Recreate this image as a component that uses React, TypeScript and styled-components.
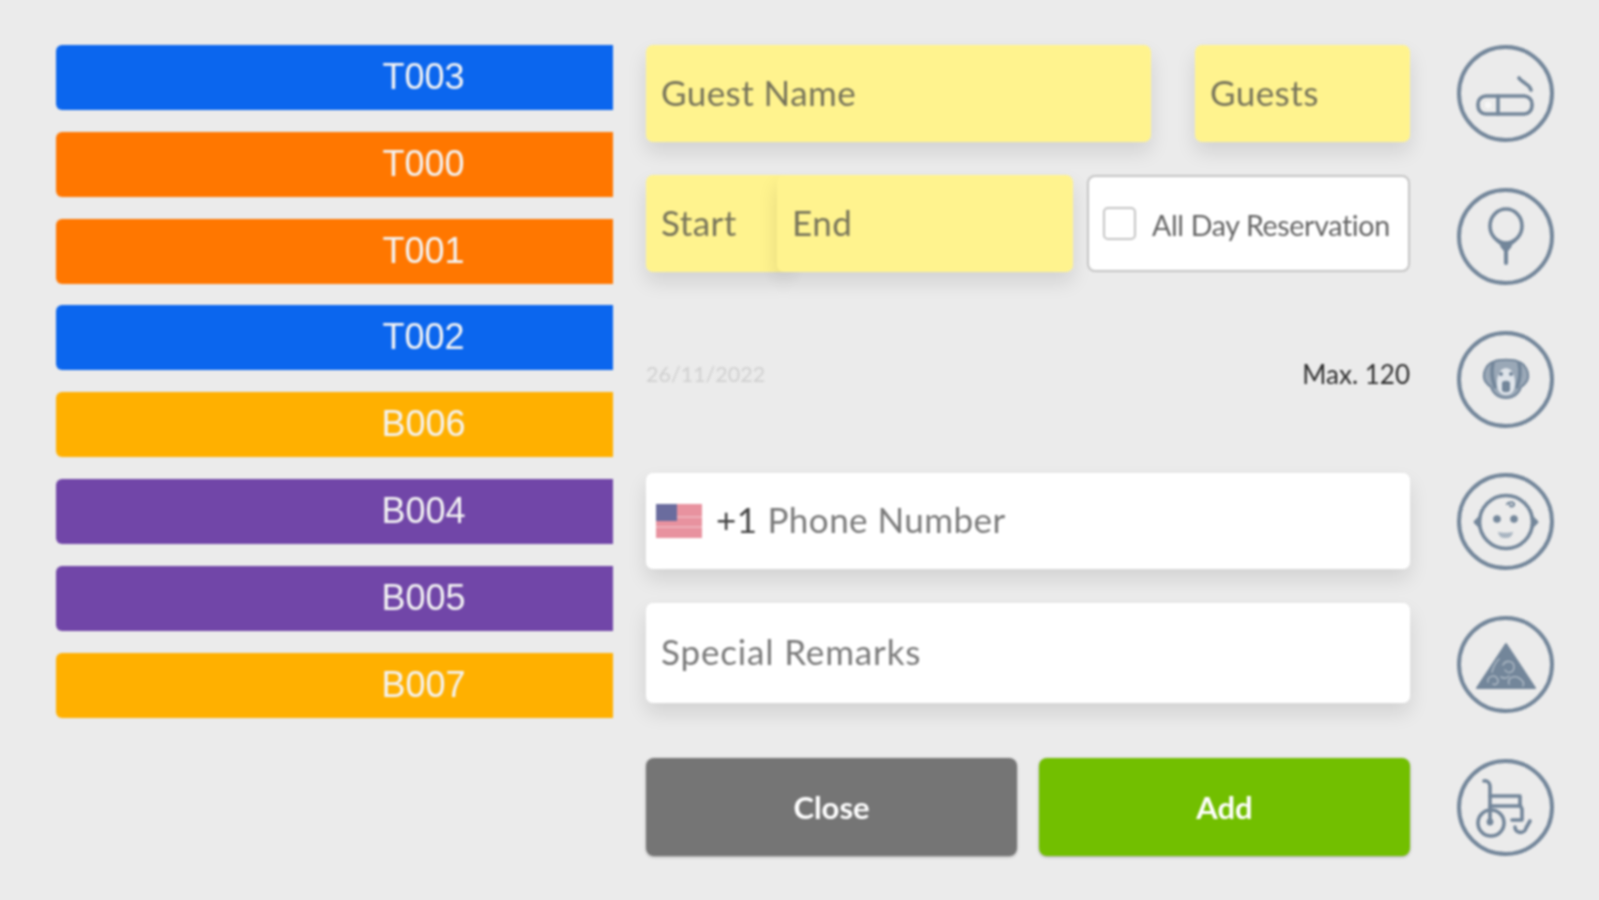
import React from 'react';
import styled, { createGlobalStyle } from 'styled-components';

const GlobalStyle = createGlobalStyle`
    html, body {
        margin: 0;
        padding: 0;
        background: #ebebeb;
    }
    body {
        font-family: Lato, "Open Sans", sans-serif;
    }
`;

const Page = styled.div`
    width: 1599px;
    height: 900px;
    box-sizing: border-box;
    padding: 45px 45px 0 56px;
    display: flex;
    align-items: flex-start;
    overflow: hidden;
    filter: blur(0.9px);
`;

const TableList = styled.div`
    width: 557px;
    display: flex;
    flex-direction: column;
    gap: 21.8px;
    margin-right: 33px;
`;

const TableBar = styled.div<{ color: string }>`
    height: 65px;
    box-sizing: border-box;
    padding: 0 0 1px 178px;
    display: flex;
    align-items: center;
    justify-content: center;
    background: ${(props) => props.color};
    border-radius: 6px 0 0 6px;
    color: #f4f4f4;
    font-family: "Liberation Sans", sans-serif;
    font-size: 36px;
`;

const Form = styled.div`
    width: 764px;
    display: flex;
    flex-direction: column;
    margin-right: 47px;
`;

const Row = styled.div<{ mb: number; h: number }>`
    display: flex;
    height: ${(props) => props.h}px;
    margin-bottom: ${(props) => props.mb}px;
`;

const Field = styled.div<{ yellow?: boolean; w?: number; ml?: number; spacing?: number }>`
    box-sizing: border-box;
    display: flex;
    align-items: center;
    padding: 0 0 4px 15px;
    ${(props) => (props.w ? `width: ${props.w}px;` : 'flex: 1;')}
    ${(props) => (props.ml ? `margin-left: ${props.ml}px;` : '')}
    position: relative;
    background: ${(props) => (props.yellow ? '#fff38e' : '#ffffff')};
    color: ${(props) => (props.yellow ? '#77745a' : '#7a7a7a')};
    border-radius: 7px;
    box-shadow: 0 10px 20px rgba(0, 0, 0, 0.11);
    font-size: 35px;
    letter-spacing: ${(props) => props.spacing || 0.45}px;
    white-space: nowrap;
`;

const CheckCard = styled.div`
    width: 323px;
    margin-left: 14px;
    box-sizing: border-box;
    display: flex;
    align-items: center;
    padding-left: 14px;
    background: #ffffff;
    border: 2px solid #c4c4c4;
    border-radius: 8px;
`;

const CheckBox = styled.span`
    width: 33px;
    height: 33px;
    box-sizing: border-box;
    border: 2px solid #c4c4c4;
    border-radius: 5px;
    margin-right: 16px;
    background: #ffffff;
`;

const CheckLabel = styled.span`
    color: #646464;
    font-size: 28.6px;
    letter-spacing: -0.35px;
    white-space: nowrap;
    padding-top: 3px;
`;

const InfoRow = styled.div`
    height: 201px;
    display: flex;
    align-items: center;
    justify-content: space-between;
    padding-top: 2px;
    box-sizing: border-box;
`;

const DateText = styled.span`
    color: #d0d0d0;
    font-size: 21.5px;
`;

const MaxText = styled.span`
    color: #2e2e2e;
    font-size: 26px;
`;

const FlagWrap = styled.svg`
    width: 46px;
    height: 34px;
    margin: 4px 14px 0 -5px;
    flex-shrink: 0;
`;

const DialCode = styled.span`
    color: #444444;
    margin-right: 10px;
`;

const ActionButton = styled.div<{ color: string; w: number; ml?: number }>`
    width: ${(props) => props.w}px;
    margin-left: ${(props) => props.ml || 0}px;
    display: flex;
    align-items: center;
    justify-content: center;
    background: ${(props) => props.color};
    color: #ffffff;
    border-radius: 8px;
    box-shadow: 0 1px 3px rgba(0, 0, 0, 0.3);
    font-size: 31px;
    font-weight: 700;
`;

const IconColumn = styled.div`
    height: 811px;
    display: flex;
    flex-direction: column;
    justify-content: space-between;
`;

const CircleIcon = styled.svg`
    width: 97px;
    height: 97px;
    display: block;
    color: #73869a;
`;

const tables = [
    { name: 'T003', color: '#0b66ee' },
    { name: 'T000', color: '#ff7700' },
    { name: 'T001', color: '#ff7700' },
    { name: 'T002', color: '#0b66ee' },
    { name: 'B006', color: '#ffb000' },
    { name: 'B004', color: '#7146a8' },
    { name: 'B005', color: '#7146a8' },
    { name: 'B007', color: '#ffb000' },
];

const Circle: React.FC<{ children: React.ReactNode }> = ({ children }) => (
    <CircleIcon viewBox="0 0 97 97" fill="none" stroke="currentColor" strokeWidth="3.6" strokeLinecap="round" strokeLinejoin="round">
        <circle cx="48.5" cy="48.5" r="46.5" strokeWidth="4" />
        {children}
    </CircleIcon>
);

const UsFlag = () => (
    <FlagWrap viewBox="0 0 46 34">
        <rect width="46" height="34" fill="#e8929f" />
        <rect y="12" x="21" width="25" height="2" fill="#eeb0b9" />
        <rect y="22" width="46" height="2" fill="#eeb0b9" />
        <rect width="21" height="17" fill="#6a6c9e" />
    </FlagWrap>
);

const App: React.FC = () => {
    return (
        <Page>
            <GlobalStyle />
            <TableList>
                {tables.map((t) => (
                    <TableBar key={t.name} color={t.color}>
                        {t.name}
                    </TableBar>
                ))}
            </TableList>
            <Form>
                <Row h={97} mb={33}>
                    <Field yellow w={505}>Guest Name</Field>
                    <Field yellow w={215} ml={44}>Guests</Field>
                </Row>
                <Row h={97} mb={0}>
                    <Field yellow w={144}>Start</Field>
                    <Field yellow w={296} ml={-13}>End</Field>
                    <CheckCard>
                        <CheckBox />
                        <CheckLabel>All Day Reservation</CheckLabel>
                    </CheckCard>
                </Row>
                <InfoRow>
                    <DateText>26/11/2022</DateText>
                    <MaxText>Max. 120</MaxText>
                </InfoRow>
                <Row h={96} mb={34}>
                    <Field>
                        <UsFlag />
                        <DialCode>+1</DialCode>
                        Phone Number
                    </Field>
                </Row>
                <Row h={100} mb={55}>
                    <Field spacing={0.85}>Special Remarks</Field>
                </Row>
                <Row h={98} mb={0}>
                    <ActionButton color="#757575" w={372}>Close</ActionButton>
                    <ActionButton color="#72bf00" w={372} ml={22}>Add</ActionButton>
                </Row>
            </Form>
            <IconColumn>
                <Circle>
                    <rect x="21" y="51" width="54" height="18" rx="8" />
                    <path d="M41 51v18" />
                    <circle cx="31" cy="60" r="3.2" fill="#f6f6f6" stroke="none" />
                    <path d="M62 33c2 3 5 4 7 6 2 1 4 3 5 6" />
                </Circle>
                <Circle>
                    <ellipse cx="49" cy="38" rx="16" ry="17" />
                    <path d="M40 52l6 5h6l6-5" />
                    <path d="M45 58h8l-4 5z" fill="currentColor" />
                    <path d="M49 63v12" strokeWidth="4" />
                </Circle>
                <Circle>
                    <path d="M36 31c5-3 21-3 26 0 6 2 10 9 9 16-1 5-4 7-7 9-2 7-8 11-15 11s-13-4-15-11c-3-2-6-4-7-9-1-7 3-14 9-16z" fill="#9aa8b7" strokeWidth="2" />
                    <path d="M36 32c-2 8-1 16 2 24M62 32c2 8 1 16-2 24" />
                    <path d="M40 55c-1-9 3-18 9-18s10 9 9 18c-1 6-4 9-9 9s-8-3-9-9z" fill="#dfe4ea" stroke="none" />
                    <circle cx="44" cy="43" r="2" fill="currentColor" stroke="none" />
                    <circle cx="54" cy="43" r="2" fill="currentColor" stroke="none" />
                    <path d="M45 52c0-3 8-3 8 0v7c0 3-8 3-8 0z" fill="currentColor" stroke="none" />
                </Circle>
                <Circle>
                    <circle cx="49" cy="49" r="26.5" />
                    <path d="M22.5 45l-4 4 4 4M75.5 45l4 4-4 4" />
                    <circle cx="40" cy="46" r="3.8" fill="currentColor" stroke="none" />
                    <circle cx="57" cy="46" r="3.8" fill="currentColor" stroke="none" />
                    <path d="M41 59c4 1 11 1 15 0-1 5-4 6-7.5 6S42 64 41 59z" fill="#a9b5c1" stroke="none" />
                    <path d="M50 31c3-3 8-2 7 1-1 2-4 2-4 0" strokeWidth="2" />
                </Circle>
                <Circle>
                    <path d="M49 28L20 72h58z" fill="currentColor" strokeWidth="2" />
                    <path d="M46 49c3-6 11-4 11 2s-7 7-9 3M31 66c-1-5 6-8 9-4s-1 8-4 6M52 68c-2-6 5-9 10-6s5 6 4 8M44 61c3 2 7 1 8-1M42 43c-3 3-6 9-7 13" stroke="#aab6c2" strokeWidth="1.6" />
                </Circle>
                <Circle>
                    <path d="M27 22c3-1 6 2 6 5v33" />
                    <path d="M33 37h30v9M33 47h30" />
                    <path d="M63 46l2 4v11H55" />
                    <circle cx="34" cy="64" r="13" />
                    <circle cx="33" cy="63" r="1.6" fill="currentColor" />
                    <path d="M58 68c0 7 10 7 11 1l4-7" />
                </Circle>
            </IconColumn>
        </Page>
    );
};

export default App;
